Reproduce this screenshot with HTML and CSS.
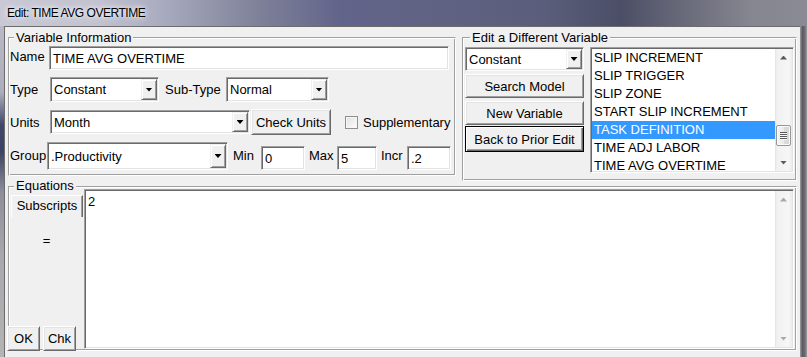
FILE: index.html
```html
<!DOCTYPE html>
<html lang="en">
<head>
    <meta charset="UTF-8">
    <title>Edit: TIME AVG OVERTIME</title>
    <link rel="stylesheet" href="styles.css">
</head>
<body>
    <div class="window">
        <div class="titlebar">
            <span class="title">Edit: TIME AVG OVERTIME</span>
        </div>

        <div class="frame">
            <div class="client">

                <div class="top-row">
                    <!-- Variable Information -->
                    <fieldset class="group var-info">
                        <legend>Variable Information</legend>

                        <div class="row row-name">
                            <span class="lbl lbl-name">Name</span>
                            <div class="field sunken name-field">TIME AVG OVERTIME</div>
                        </div>

                        <div class="row row-type">
                            <span class="lbl lbl-type">Type</span>
                            <div class="combo sunken type-combo">
                                <span class="combo-text">Constant</span>
                                <span class="drop"><i class="tri-down"></i></span>
                            </div>
                            <span class="lbl lbl-sub">Sub-Type</span>
                            <div class="combo sunken subtype-combo">
                                <span class="combo-text">Normal</span>
                                <span class="drop"><i class="tri-down"></i></span>
                            </div>
                        </div>

                        <div class="row row-units">
                            <span class="lbl lbl-type">Units</span>
                            <div class="combo sunken units-combo">
                                <span class="combo-text">Month</span>
                                <span class="drop"><i class="tri-down"></i></span>
                            </div>
                            <button class="btn check-btn">Check Units</button>
                            <span class="check"></span>
                            <span class="lbl lbl-supp">Supplementary</span>
                        </div>

                        <div class="row row-group">
                            <span class="lbl lbl-group">Group</span>
                            <div class="combo sunken group-combo">
                                <span class="combo-text">.Productivity</span>
                                <span class="drop"><i class="tri-down"></i></span>
                            </div>
                            <span class="lbl lbl-min">Min</span>
                            <div class="field sunken num num-min">0</div>
                            <span class="lbl lbl-max">Max</span>
                            <div class="field sunken num num-max">5</div>
                            <span class="lbl lbl-incr">Incr</span>
                            <div class="field sunken num num-incr">.2</div>
                        </div>
                    </fieldset>

                    <!-- Edit a Different Variable -->
                    <fieldset class="group other-var">
                        <legend>Edit a Different Variable</legend>

                        <div class="other-inner">
                            <div class="other-col">
                                <div class="combo sunken kind-combo">
                                    <span class="combo-text">Constant</span>
                                    <span class="drop"><i class="tri-down"></i></span>
                                </div>
                                <button class="btn col-btn">Search Model</button>
                                <button class="btn col-btn">New Variable</button>
                                <button class="btn col-btn default-btn">Back to Prior Edit</button>
                            </div>

                            <div class="list sunken">
                                <ul class="list-items">
                                    <li>SLIP INCREMENT</li>
                                    <li>SLIP TRIGGER</li>
                                    <li>SLIP ZONE</li>
                                    <li>START SLIP INCREMENT</li>
                                    <li class="selected">TASK DEFINITION</li>
                                    <li>TIME ADJ LABOR</li>
                                    <li>TIME AVG OVERTIME</li>
                                </ul>
                                <div class="vscroll">
                                    <span class="arrow"><i class="tri-up"></i></span>
                                    <div class="track">
                                        <div class="thumb list-thumb"><i class="grip"></i></div>
                                    </div>
                                    <span class="arrow"><i class="tri-down-sb"></i></span>
                                </div>
                            </div>
                        </div>
                    </fieldset>
                </div>

                <!-- Equations -->
                <fieldset class="group equations">
                    <legend>Equations</legend>

                    <div class="eq-body">
                        <div class="eq-panel">
                            <div class="tab">Subscripts</div>
                            <div class="eq-sign">=</div>
                            <div class="eq-buttons">
                                <button class="btn small-btn">OK</button>
                                <button class="btn small-btn">Chk</button>
                            </div>
                        </div>

                        <div class="editor sunken">
                            <div class="editor-text">2</div>
                            <div class="vscroll disabled">
                                <span class="arrow"><i class="tri-up"></i></span>
                                <div class="track"></div>
                                <span class="arrow"><i class="tri-down-sb"></i></span>
                            </div>
                        </div>
                    </div>
                </fieldset>

            </div>
        </div>
    </div>
</body>
</html>
```

FILE: styles.css
```css
/* Grundstil */
* {
    margin: 0;
    padding: 0;
    box-sizing: border-box;
}

body {
    font-family: "Liberation Sans", Arial, sans-serif;
    font-size: 13px;
    line-height: 15px;
    color: #000;
    background: #5e6180;
    overflow: hidden;
}

.window {
    width: 807px;
    height: 357px;
    display: flex;
    flex-direction: column;
}

/* Glas-Titelleiste */
.titlebar {
    height: 26px;
    flex: none;
    display: flex;
    align-items: center;
    padding-left: 7px;
    background: linear-gradient(90deg, #c9c9d5 0%, #c2c2d0 12%, #a9abbf 20%, #7f8199 32%, #62658a 42%, #5f6282 55%, #5a5d7a 68%, #4c4e66 77%, #6a6b7a 85%, #868691 93%, #8a8a94 100%);
}

.title {
    font-size: 12px;
    letter-spacing: -0.45px;
    color: #000;
    text-shadow: 0 0 8px #fff, 0 0 4px #fff;
}

.frame {
    flex: 1;
    display: flex;
    padding: 0 7px 0 4px;
    background:
        linear-gradient(90deg, #9c9ca0 0%, #5a5a60 35%, #6c6c72 70%, #9a9aa0 100%) right top / 7px 100% no-repeat,
        linear-gradient(180deg, #b9b9c6 0%, #adadbb 20%, #40476a 30%, #3c4262 38%, #8e8e9a 50%, #a8a8ae 70%, #b4b4b4 100%) left top / 4px 100% no-repeat;
}

.client {
    width: 796px;
    background: #f0f0f0;
    border-left: 1px solid #6c6c6c;
    border-top: 1px solid #6c6c6c;
    padding: 3px 3px 0 3px;
}

/* Gruppenrahmen */
.group {
    border: 1px solid;
    border-color: #a0a0a0 #fff #fff #a0a0a0;
    box-shadow: inset 1px 1px 0 #fff, inset -1px -1px 0 #a0a0a0;
    min-width: 0;
}

.group legend {
    margin-left: 5px;
    padding: 0 2px;
    line-height: 15px;
    background: #f0f0f0;
}

.top-row {
    display: flex;
    align-items: flex-start;
}

/* 3D-Rahmen */
.sunken {
    border: 1px solid;
    border-color: #a0a0a0 #fff #fff #a0a0a0;
    box-shadow: inset 1px 1px 0 #696969, inset -1px -1px 0 #e3e3e3;
    background: #fff;
}

.btn {
    font: inherit;
    color: #000;
    background: #f0f0f0;
    border: 1px solid;
    border-color: #fff #696969 #696969 #fff;
    box-shadow: inset 1px 1px 0 #e3e3e3, inset -1px -1px 0 #a0a0a0;
    text-align: center;
    cursor: pointer;
}

.default-btn {
    border: 1px solid #000;
    box-shadow: inset 1px 1px 0 #fff, inset -1px -1px 0 #696969, inset -2px -2px 0 #a0a0a0;
}

/* Variable Information */
.var-info {
    width: 448px;
    padding: 0 0 5px 0;
}

.row {
    display: flex;
    align-items: center;
    margin-top: 7px;
}

.lbl {
    flex: none;
    white-space: nowrap;
}

.row-name {
    margin-top: 1px;
    height: 24px;
}

.row-type { height: 25px; }
.row-units { height: 26px; }
.row-group { height: 28px; }

.lbl-name { width: 40px; padding-left: 1px; margin-top: -3px; }
.lbl-type { width: 41px; padding-left: 1px; }
.lbl-group { width: 38px; padding-left: 1px; margin-top: -2px; }
.lbl-sub { width: 67px; padding-left: 6px; }
.lbl-min { width: 28px; margin-left: 5px; margin-top: -2px; }
.lbl-max { width: 28px; margin-left: 4px; margin-top: -2px; }
.lbl-incr { width: 26px; margin-left: 4px; margin-top: -2px; }
.lbl-supp { margin-left: 5px; }

.field {
    height: 24px;
    padding: 4px 3px 0;
    white-space: nowrap;
}

.name-field { width: 400px; }

.num {
    align-self: flex-end;
}

.num-min { width: 44px; }
.num-max { width: 40px; }
.num-incr { width: 44px; }

.combo {
    display: flex;
    align-items: stretch;
    padding: 1px;
    height: 100%;
}

.combo-text {
    flex: 1;
    display: flex;
    align-items: center;
    padding-left: 2px;
    white-space: nowrap;
}

.drop {
    width: 16px;
    flex: none;
    display: flex;
    align-items: center;
    justify-content: center;
    background: #f0f0f0;
    border: 1px solid;
    border-color: #f0f0f0 #696969 #696969 #f0f0f0;
    box-shadow: inset 1px 1px 0 #fff, inset -1px -1px 0 #a0a0a0;
}

.tri-down {
    display: block;
    width: 7px;
    height: 4px;
    background: #000;
    clip-path: polygon(0 0, 100% 0, 50% 100%);
}

.type-combo { width: 109px; }
.subtype-combo { width: 103px; }
.units-combo { width: 200px; height: 24px; }
.group-combo { width: 181px; }

.check-btn {
    width: 80px;
    height: 26px;
    margin-left: 1px;
}

.check {
    width: 13px;
    height: 13px;
    margin-left: 14px;
    flex: none;
    border: 1px solid #8e8f8f;
    background: linear-gradient(135deg, #e0e0e0, #fdfdfd);
    box-shadow: inset 0 0 0 1px #f6f6f6;
}

/* Edit a Different Variable */
.other-var {
    width: 335px;
    margin-left: 6px;
    padding: 2px 0 7px 2px;
}

.other-inner {
    display: flex;
}

.other-col {
    width: 119px;
    display: flex;
    flex-direction: column;
}

.kind-combo { height: 24px; }

.col-btn {
    height: 24px;
    margin-top: 3px;
}

.col-btn.default-btn {
    height: 26px;
    margin-top: 1px;
}

.list {
    width: 204px;
    height: 126px;
    margin-left: 6px;
    padding: 1px;
    display: flex;
    overflow: hidden;
}

.list-items {
    list-style: none;
    flex: 1;
    overflow: hidden;
}

.list-items li {
    height: 18px;
    line-height: 10px;
    padding: 4px 0 0 2px;
    white-space: nowrap;
}

.list-items li.selected {
    background: #3399ff;
    color: #fff;
}

/* Bildlaufleiste */
.vscroll {
    width: 17px;
    flex: none;
    display: flex;
    flex-direction: column;
    background: linear-gradient(90deg, #e3e3e3 0%, #f1f1f1 12%, #f6f6f6 80%, #ebebeb 100%);
}

.arrow {
    height: 17px;
    flex: none;
    display: flex;
    align-items: center;
    justify-content: center;
}

.tri-up, .tri-down-sb {
    display: block;
    width: 7px;
    height: 4px;
    background: #5b5b5b;
}

.tri-up { clip-path: polygon(50% 0, 100% 100%, 0 100%); }
.tri-down-sb { clip-path: polygon(0 0, 100% 0, 50% 100%); }

.disabled .tri-up, .disabled .tri-down-sb {
    background: #a8a8a8;
}

.track {
    flex: 1;
}

.thumb {
    height: 21px;
    margin: 0 1px;
    border: 1px solid #979797;
    border-radius: 2px;
    background: linear-gradient(90deg, #f4f4f4 0%, #ebebeb 50%, #dcdcdc 51%, #d6d6d6 100%);
    box-shadow: inset 0 0 0 1px #fbfbfb;
    display: flex;
    align-items: center;
    justify-content: center;
}

.list-thumb { margin-top: 59px; }

.grip {
    display: block;
    width: 7px;
    height: 8px;
    background: repeating-linear-gradient(180deg, #5a5a5a 0 1px, #f8f8f8 1px 2px);
}

/* Equations */
.equations {
    margin-top: 2px;
    padding: 0 2px 1px 0;
}

.equations legend {
    line-height: 6px;
}

.eq-body {
    display: flex;
    height: 160px;
}

.eq-panel {
    width: 75px;
    flex: none;
    display: flex;
    flex-direction: column;
}

.tab {
    width: 72px;
    height: 22px;
    margin: 6px 0 0 2px;
    border-top: 1px solid #fff;
    border-left: 1px solid #fff;
    border-right: 1px solid #696969;
    box-shadow: inset -1px 0 0 #a0a0a0;
    text-align: center;
    line-height: 20px;
}

.eq-sign {
    margin-top: 16px;
    text-align: center;
}

.eq-buttons {
    display: flex;
    gap: 3px;
    margin: auto 0 -2px -2px;
}

.small-btn {
    width: 33px;
    height: 25px;
}

.editor {
    flex: 1;
    display: flex;
    padding: 1px;
}

.editor-text {
    flex: 1;
    padding: 3px 2px;
}
```
